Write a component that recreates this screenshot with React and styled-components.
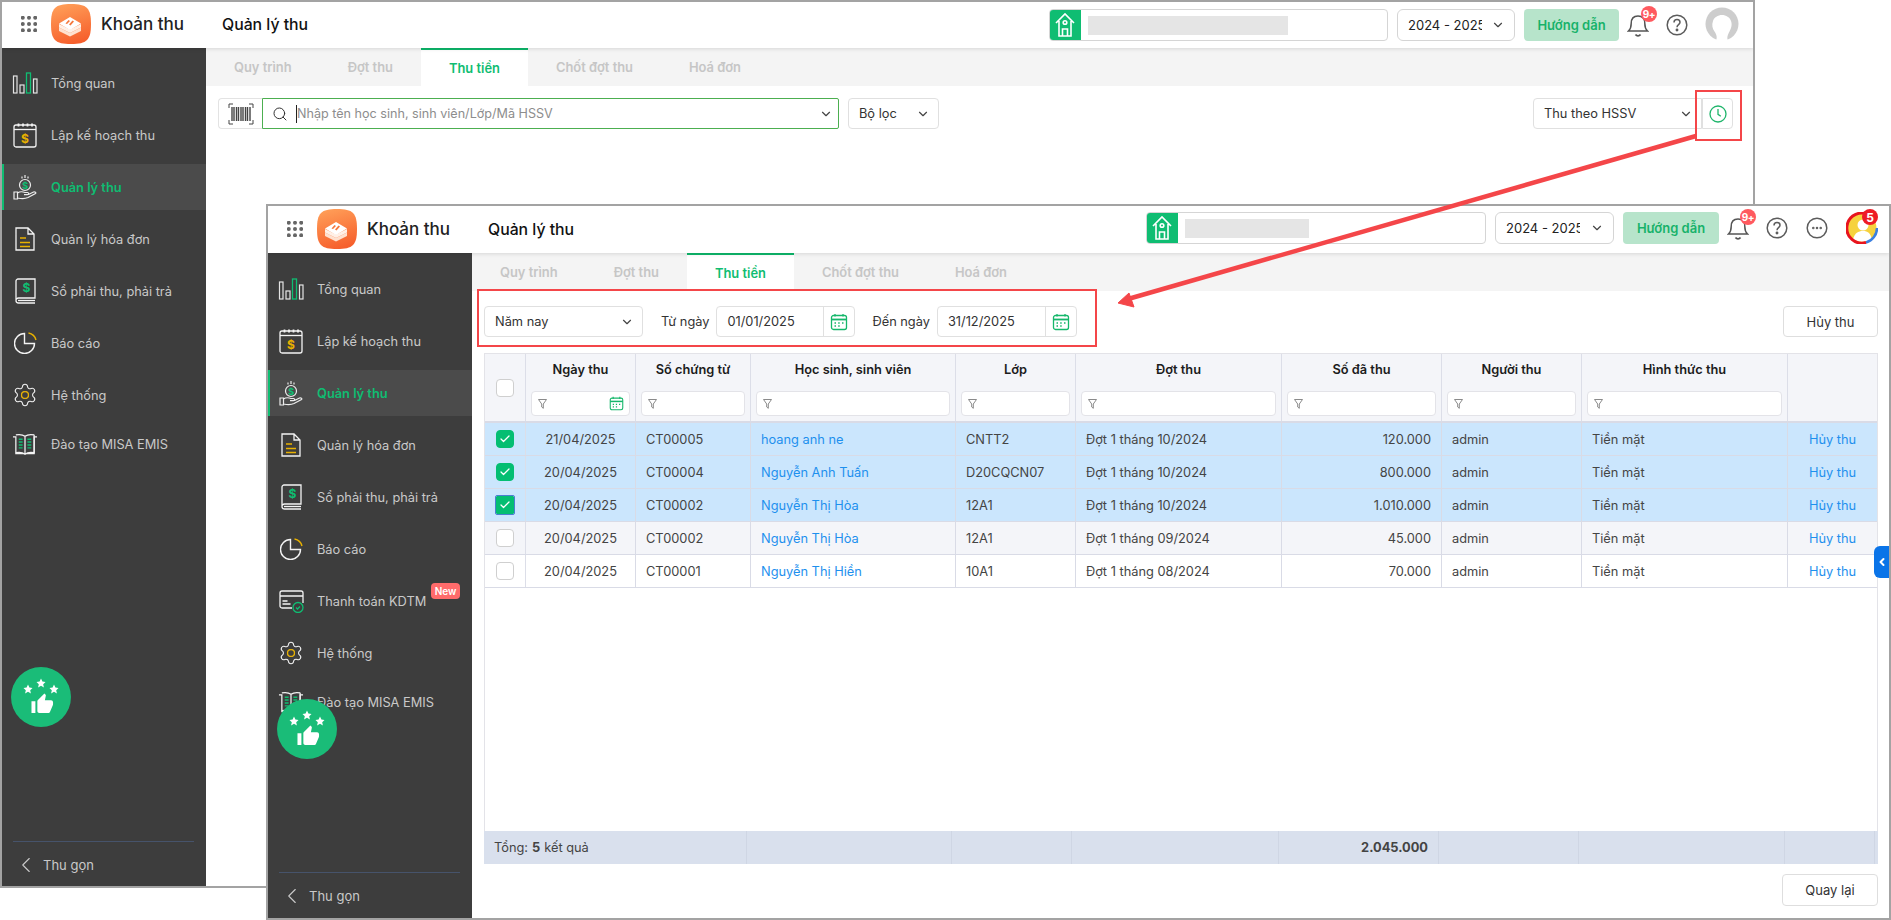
import React from "react";
import styled, { createGlobalStyle } from "styled-components";
import { ChevronDown, ChevronLeft, Search, Settings, Check } from "lucide-react";

const Global = createGlobalStyle`
  html, body { margin: 0; padding: 0; background: #fff; }
  body { font-family: Inter, "Noto Sans", "Liberation Sans", sans-serif; }
  * { box-sizing: border-box; }
`;

const GREEN = "#0fbd72";
const YEL = "#e8b100";

const Page = styled.div`
  position: relative; width: 1891px; height: 920px; overflow: hidden; background: #fff;
`;
const Win = styled.section`
  position: absolute; left: ${p => p.$x}px; top: ${p => p.$y}px; width: ${p => p.$w}px; height: ${p => p.$h}px;
  border: 2px solid #a3a3a3; background: #fff; display: flex; flex-direction: column; overflow: hidden;
`;
const Header = styled.header`
  flex: 0 0 ${p => p.$h}px; display: flex; align-items: flex-start; background: #fff;
  box-shadow: 0 1px 4px rgba(0,0,0,.12); position: relative; z-index: 2; padding-right: ${p => p.$pr}px;
`;
const Brand = styled.div`
  width: 204px; height: 40px; margin-top: ${p => p.$top}px; padding-left: 19px; display: flex; align-items: center; flex: none;
`;
const AppName = styled.span`
  margin-left: 10px; font-size: 17px; font-weight: 500; color: #222; white-space: nowrap;
`;
const PageTitle = styled.div`
  height: 40px; margin-top: ${p => p.$top}px; margin-left: 16px; display: flex; align-items: center;
  font-size: 15.8px; font-weight: 500; color: #111;
`;
const Controls = styled.div`
  margin-left: auto; margin-top: ${p => p.$top}px; display: flex; align-items: center;
`;
const HomeField = styled.div`
  width: ${p => p.$w}px; height: 32px; display: flex; align-items: center; border: 1px solid #d5d5d5; border-radius: 4px; overflow: hidden;
`;
const HomeTile = styled.div`
  width: 32px; height: 32px; margin-left: -1px; background: ${GREEN}; display: flex; align-items: center; justify-content: center; flex: none;
`;
const Blurred = styled.div`
  width: ${p => p.$w}px; height: 19px; margin-left: 7px; background: #e5e5e5; filter: blur(.6px);
`;
const YearSelect = styled.div`
  width: ${p => p.$w}px; height: 32px; margin-left: 9px; display: flex; align-items: center; justify-content: space-between;
  padding: 0 9px 0 10px; border: 1px solid #d5d5d5; border-radius: 6px; font-size: 13px; color: #222;
`;
const Clip = styled.span`
  width: 74px; overflow: hidden; white-space: nowrap;
`;
const Guide = styled.div`
  width: ${p => p.$w}px; height: 32px; margin-left: 9px; background: #b7e4cb; border-radius: 4px; display: flex; align-items: center; justify-content: center;
  color: #17b26a; font-size: 13px; font-weight: 600;
`;
const IconCell = styled.div`
  width: ${p => p.$w}px; height: 32px; position: relative; display: flex; align-items: center; justify-content: center; flex: none;
`;
const RedBadge = styled.span`
  position: absolute; top: -3px; left: ${p => p.$l}px; width: 16px; height: 16px; border-radius: 50%; background: ${p => p.$deep ? "#ee1c25" : "#ff5a5f"}; color: #fff;
  font-size: ${p => p.$deep ? 12 : 10}px; font-weight: 700; display: flex; align-items: center; justify-content: center; letter-spacing: -.3px;
`;
const AvatarBox = styled.div`
  width: ${p => p.$w}px; height: 32px; margin-left: 8px; position: relative; flex: none;
`;
const Body = styled.div`
  flex: 1; display: flex; min-height: 0;
`;
const Side = styled.nav`
  width: 204px; flex: none; background: #3d3d3d; position: relative; display: flex; flex-direction: column; padding-top: ${p => p.$pt}px;
`;
const Item = styled.div`
  position: relative; height: 46px; flex: none; margin-bottom: ${p => p.$tight ? 3 : 6}px;
  display: flex; align-items: center; padding-left: 8px;
  border-left: 2px solid ${p => p.$active ? GREEN : "transparent"};
  background: ${p => p.$active ? "#4b4b4b" : "transparent"};
  color: ${p => p.$active ? GREEN : "#c9c9c9"};
  font-size: 12.8px; font-weight: ${p => p.$active ? 600 : 400};
`;
const ItemIcon = styled.span`
  width: 26px; height: 30px; margin-right: 13px; display: flex; align-items: center; justify-content: center; flex: none;
`;
const NewTag = styled.span`
  position: absolute; left: 161px; top: 5px; width: 29px; height: 16px; background: #ff6b6b; border-radius: 4px; color: #fff;
  font-size: 10px; font-weight: 600; display: flex; align-items: center; justify-content: center;
`;
const SideFoot = styled.div`
  margin-top: auto; flex: 0 0 ${p => p.$h}px; margin-left: 11px; margin-right: 12px; border-top: 1px solid #46536b;
  display: flex; align-items: center; color: #c9c9c9; font-size: 13px; padding-top: ${p => p.$pt}px;
`;
const FootLabel = styled.span`
  margin-left: 4px;
`;
const Thumb = styled.div`
  position: absolute; left: 9px; bottom: 159px; width: 60px; height: 60px; border-radius: 50%; background: #1abc78;
  display: flex; align-items: center; justify-content: center; z-index: 1;
`;
const Main = styled.main`
  flex: 1; min-width: 0; display: flex; flex-direction: column; background: #fff;
`;
const Tabs = styled.div`
  flex: 0 0 38px; display: flex; background: #f4f4f4;
`;
const Tab = styled.div`
  padding: 0 28px; display: flex; align-items: center; font-size: 12.9px; font-weight: 600;
  color: ${p => p.$active ? GREEN : "#c6c6c6"}; background: ${p => p.$active ? "#fff" : "transparent"};
  border-top: 2px solid ${p => p.$active ? "#0db76b" : "transparent"};
  ${p => p.$active ? "" : "padding-bottom: 2px;"}
`;
const Bar = styled.div`
  display: flex; align-items: center; padding: ${p => p.$pad}; flex: none;
`;
const Barcode = styled.div`
  width: 44px; height: 31px; display: flex; align-items: center; justify-content: center; border: 1px solid #e3e3e3; border-right: 0; border-radius: 4px 0 0 4px;
`;
const SearchField = styled.div`
  width: 577px; height: 31px; border: 1px solid #4caf50; display: flex; align-items: center; padding: 0 5px 0 9px; border-radius: 0 2px 2px 0;
  font-size: 12.6px; color: #8d8d8d;
`;
const Caret = styled.span`
  width: 1px; height: 18px; background: #222; margin: 0 0 0 8px;
`;
const Grow = styled.span`
  flex: 1; white-space: nowrap;
`;
const Dropdown = styled.div`
  width: ${p => p.$w}px; height: 31px; margin-left: ${p => p.$ml || "0"}; border: 1px solid #e0e0e0; border-radius: ${p => p.$r || "4px"};
  display: flex; align-items: center; justify-content: space-between; padding: 0 ${p => p.$pr || 8}px 0 ${p => p.$pl || 10}px; font-size: 12.8px; color: #333; flex: none;
`;
const ClockBtn = styled.div`
  width: 31px; height: 31px; border: 1px solid #e0e0e0; border-left: 1px solid #e0e0e0; border-radius: 0 4px 4px 0; display: flex; align-items: center; justify-content: center; flex: none;
`;
const Label = styled.span`
  font-size: 12.8px; color: #333; margin-left: ${p => p.$ml}px; margin-right: 7px; white-space: nowrap;
`;
const DateField = styled.div`
  width: ${p => p.$w}px; height: 31px; border: 1px solid #e0e0e0; border-radius: 4px; display: flex; align-items: stretch; font-size: 12.8px; color: #333; flex: none;
`;
const DateText = styled.span`
  flex: 1; display: flex; align-items: center; padding-left: 10px; border-right: 1px solid #e0e0e0;
`;
const DateIcon = styled.span`
  width: 30px; display: flex; align-items: center; justify-content: center;
`;
const Outline = styled.div`
  margin-left: auto; width: ${p => p.$w}px; height: ${p => p.$h}px; border: 1px solid #dedede; border-radius: 4px; display: flex; align-items: center; justify-content: center;
  font-size: 13px; color: #333; flex: none;
`;
const Table = styled.div`
  margin: 0 11px 0 12px; flex: 1; min-height: 0; display: flex; flex-direction: column; border: 1px solid #e3e3e8; border-bottom: 0;
`;
const COLS = "41px 110px 115px 205px 120px 206px 160px 140px 206px 89px";
const HeadRow = styled.div`
  display: grid; grid-template-columns: ${COLS}; height: 69px; flex: none; background: #f4f5f9; border-bottom: 2px solid #d9dbe6;
`;
const HeadCell = styled.div`
  border-right: 1px solid #dcdee8; padding: 0 5px; display: flex; flex-direction: column; align-items: stretch;
  &:last-child { border-right: 0; }
`;
const BoxCell = styled.div`
  border-right: 1px solid #dcdee8; display: flex; align-items: center; justify-content: center;
`;
const HeadTitle = styled.div`
  height: 31px; margin-bottom: 6px; display: flex; align-items: center; justify-content: center; font-size: 12.8px; font-weight: 600; color: #1c1c1c; white-space: nowrap;
`;
const Filter = styled.div`
  height: 25px; background: #fff; border: 1px solid #e3e3e8; border-radius: 4px; display: flex; align-items: center; justify-content: space-between; padding: 0 5px 0 6px;
`;
const Row = styled.div`
  display: grid; grid-template-columns: ${COLS}; height: 33px; flex: none; border-bottom: 1px solid #d9dbe6; background: ${p => p.$bg};
`;
const Cell = styled.div`
  border-right: 1px solid #d9dbe6; display: flex; align-items: center; padding: 0 10px; font-size: 12.8px; white-space: nowrap;
  justify-content: ${p => p.$align || "flex-start"}; color: ${p => p.$link ? "#1e90ee" : "#444"};
  &:last-child { border-right: 0; }
`;
const Box = styled.span`
  width: 18px; height: 18px; border-radius: 4px; flex: none; display: flex; align-items: center; justify-content: center;
  background: ${p => p.$on ? "#04be72" : "#fff"}; border: 1px solid ${p => p.$on ? "#04be72" : "#cfcfcf"};
  ${p => p.$focus ? "outline: 1px solid #4a7fd0; border-radius: 1px;" : ""}
`;
const Spacer = styled.div`
  flex: 1;
`;
const Foot = styled.div`
  display: grid; grid-template-columns: 263px 205px 120px 207px 160px 140px 206px 90px 2px; height: 33px; flex: none; background: #d9e0ed; margin: 0 -1px;
`;
const FootCell = styled.div`
  border-right: 1px solid #cfd6e4; display: flex; align-items: center; padding: 0 10px; font-size: 12.8px; color: #444;
  justify-content: ${p => p.$align || "flex-start"}; font-weight: ${p => p.$bold ? 700 : 400}; white-space: nowrap;
  &:last-child { border-right: 0; padding: 0; }
  b { font-weight: 700; margin: 0 4px; }
`;
const BottomBar = styled.div`
  display: flex; padding: 10px 11px 12px 12px; flex: none;
`;
const SideToggle = styled.div`
  position: absolute; right: 0; top: 340px; width: 15px; height: 32px; background: #0a74e8; border-radius: 6px 0 0 6px; z-index: 3;
  display: flex; align-items: center; justify-content: center;
`;
const RedFrame = styled.div`
  position: absolute; left: ${p => p.$x}px; top: ${p => p.$y}px; width: ${p => p.$w}px; height: ${p => p.$h}px; border: 2px solid #f44649; z-index: 5; pointer-events: none;
`;
const ArrowLayer = styled.svg`
  position: absolute; left: 0; top: 0; width: 1891px; height: 920px; z-index: 6; pointer-events: none;
`;

const W = "#f3f3f3";
const S = { fill: "none", stroke: W, strokeWidth: 1.3 };

const GridDots = () => (
  <svg width="16" height="16" viewBox="0 0 16 16" fill="#666" style={{ flex: "none" }}>
    {[1.800, 8, 14.200].flatMap(y => [1.800, 8, 14.200].map(x => <circle key={x + "-" + y} cx={x} cy={y} r="2" />))}
  </svg>
);
const Logo = () => (
  <svg width="40" height="40" viewBox="0 0 40 40" style={{ flex: "none", marginLeft: 14 }}>
    <defs><linearGradient id="lg" x1="0.25" y1="0" x2="0.55" y2="1"><stop offset="0" stopColor="#ff9e58" /><stop offset="1" stopColor="#f65f2c" /></linearGradient></defs>
    <path d="M20 0C36 0 40 4 40 20S36 40 20 40 0 36 0 20 4 0 20 0Z" fill="url(#lg)" />
    <path d="M8 23.500v3.500l11 5.500 11-5.500v-3.500l-11 5.500z" fill="#ffe1cf" />
    <path d="M8 20v3.500l11 5.500 11-5.500v-3.500l-11 5.500z" fill="#fff0e6" />
    <path d="M19 13l11 6.500-11 6.500-11-6.500z" fill="#fff" />
    <path d="M14.500 19.500l3-3.500 1.500 1-3 3zM19.500 21.500l3.500-4-1.500-1-3.500 4z" fill="#f5763a" />
  </svg>
);
const House = () => (
  <svg width="20" height="26" viewBox="0 0 20 26" fill="none" stroke="#fff" strokeWidth="1.6">
    <path d="M1 11L10 2l9 9M4 9v15h12V9" />
    <path d="M7.500 24v-7h5v7" /><circle cx="10" cy="10.500" r="1.800" />
  </svg>
);
const Bell = () => (
  <svg width="22" height="26" viewBox="0 0 22 26" fill="none" stroke="#555" strokeWidth="1.500">
    <path d="M1.500 19c2-1.800 2.700-3.500 2.700-7.500C4.200 6.500 7 4 11 4s6.800 2.500 6.800 7.500c0 4 .7 5.700 2.700 7.500z" /><path d="M8.500 22.500c.6.800 1.500 1.300 2.500 1.300s1.900-.5 2.500-1.300" strokeWidth="1.800" />
  </svg>
);
const Help = () => (
  <svg width="22" height="22" viewBox="0 0 22 22" fill="none" stroke="#5c5c5c" strokeWidth="1.500">
    <circle cx="11" cy="11" r="9.800" /><path d="M8 8.500c0-1.700 1.300-3 3-3s3 1.200 3 2.800c0 2.400-3 2.400-3 5" /><circle cx="11" cy="16" r=".7" fill="#5c5c5c" />
  </svg>
);
const More = () => (
  <svg width="22" height="22" viewBox="0 0 22 22" fill="none" stroke="#5c5c5c" strokeWidth="1.500">
    <circle cx="11" cy="11" r="9.800" /><circle cx="7.300" cy="11" r=".5" /><circle cx="11" cy="11" r=".5" /><circle cx="14.700" cy="11" r=".5" />
  </svg>
);
const GreyAvatar = () => (
  <svg width="34" height="32" viewBox="0 0 34 32" style={{ overflow: "visible" }}>
    <circle cx="17" cy="15" r="16.500" fill="#cdcdcd" />
    <path d="M11 32c1.500-4 .5-6.500-1.500-9.500S6.500 16 8 12c1-3.500 5-6 9-6s8 2.500 9 6c1.500 4 0 7.500-1.500 10.500S21.500 28 23 32z" fill="#fff" />
  </svg>
);
const ColorAvatar = () => (
  <svg width="32" height="32" viewBox="0 0 32 32" fill="none">
    <circle cx="16" cy="16" r="14.500" fill="#f6d23e" />
    <circle cx="17" cy="13" r="5.500" fill="#fff" /><path d="M7 27c2-6 5-8 10-8s7 2 9 8c-5 3.500-14 3.500-19 0z" fill="#fff" />
    <path d="M31 16A15 15 0 0 1 20 30.500" stroke="#3a7fe0" strokeWidth="2.500" />
    <path d="M20 30.500A15 15 0 1 1 24 3.500" stroke="#e8141e" strokeWidth="3" />
  </svg>
);

const IcOverview = () => (
  <svg width="26" height="22" viewBox="0 0 26 22" {...S} strokeWidth="1.200" stroke="#e4e4e4">
    <rect x="1.500" y="4" width="3.500" height="17" /><rect x="8" y="13" width="4" height="8" />
    <rect x="14.500" y="1" width="4" height="20" stroke={GREEN} strokeWidth="1.300" /><rect x="21.500" y="7" width="3.500" height="14" />
  </svg>
);
const Dollar = ({ x, y, c, s = 11 }) => <text x={x} y={y} fontSize={s} fontWeight="700" fill={c} stroke="none" textAnchor="middle" fontFamily="Inter, sans-serif">$</text>;
const IcPlan = () => (
  <svg width="24" height="26" viewBox="0 0 24 26" {...S}>
    <rect x="1" y="3" width="22" height="22" rx="2" /><path d="M1 7.500h22" />
    <path d="M5.500 1.500v3M10 1.500v3M14.500 1.500v3M19 1.500v3" strokeWidth="1.800" /><Dollar x="12" y="21" c={YEL} s={12} />
  </svg>
);
const IcManage = () => (
  <svg width="24" height="26" viewBox="0 0 24 26" {...S} stroke="#ececec" strokeWidth="1.200">
    <circle cx="12" cy="11" r="5.500" /><Dollar x="12" y="14.500" c={GREEN} s={9.500} />
    <path d="M12 1v3M9 2.500v2M15 2.500v2" />
    <path d="M1 18h3.500v7H1zM4.500 19c3-2 5-1.500 7.500-.5h2.500c1.500 0 1.500 2.200 0 2.200H11M4.500 24c5 1 8.500.5 10.500-.5l7.500-4c1-1-.5-2-2-1.500l-5 2.500" />
  </svg>
);
const IcInvoice = () => (
  <svg width="20" height="24" viewBox="0 0 20 24" {...S}>
    <path d="M1 1h12l6 6v16H1zM13 1v6h6" /><path d="M5 11h6" stroke={YEL} strokeWidth="1.500" /><path d="M5 15.500h10M5 19.500h10" stroke={YEL} strokeWidth="1.500" />
  </svg>
);
const IcBook = () => (
  <svg width="21" height="26" viewBox="0 0 21 26" {...S}>
    <path d="M3 1h17v19H3.500C2 20 1 21 1 22.500S2 25 3.500 25H20M3 1C2 1 1 2 1 3v19.500" /><path d="M3 22.500h17" /><Dollar x="11.500" y="14" c={GREEN} s={12} />
  </svg>
);
const IcPie = () => (
  <svg width="23" height="22" viewBox="0 0 23 22" {...S} strokeWidth="1.400">
    <path d="M10.500 1.500A10 10 0 1 0 20.500 11.500H10.500z" /><path d="M14.500 1A9.500 9.500 0 0 1 22 8" stroke={YEL} />
  </svg>
);
const IcPay = () => (
  <svg width="25" height="23" viewBox="0 0 25 23" {...S}>
    <path d="M13 18H3a2 2 0 0 1-2-2V3a2 2 0 0 1 2-2h19a2 2 0 0 1 2 2v10M1 6h23" />
    <path d="M3.500 11h5M3.500 14h8" /><circle cx="19" cy="17.500" r="5" stroke={GREEN} /><path d="M17 17.500l1.500 1.500 2.500-2.500" stroke={GREEN} />
  </svg>
);
const IcGear = () => (
  <Settings size={28} color="#f0f0f0" strokeWidth={1}><circle cx="12" cy="12" r="3.200" stroke={YEL} strokeWidth="1.200" fill="#3d3d3d" /></Settings>
);
const IcTrain = () => (
  <svg width="27" height="23" viewBox="0 0 27 23" {...S}>
    <path d="M1 3.500h3V21h9.500M26 3.500h-3V21h-9.500M4 1.500c3-.5 7-.5 9.500 1.500V22M23 1.500c-3-.5-7-.5-9.500 1.500" />
    <path d="M23 1.500V20c-3-.5-7-.5-9.500 1.500C11 19.500 7 19.500 4 20" />
    <path d="M7 6h4M7 9h4M7 12h4M7 15h4M16 6h4M16 9h4M16 12h4M16 15h4" stroke={GREEN} strokeWidth="1.500" />
  </svg>
);
const ThumbArt = () => (
  <svg width="40" height="38" viewBox="0 0 40 38" fill="#fff">
    {[[7, 11], [20, 5], [33, 11]].map(([x, y]) => (
      <path key={x} transform={`translate(${x} ${y})`} d="M0-4.500 1.400-1.400 4.500-1 2.200 1.200 2.900 4.500 0 2.800-2.900 4.500-2.200 1.200-4.500-1-1.400-1.400Z" />
    ))}
    <g transform="translate(9.500 14.500) scale(.98)">
      <path d="M1 21h4V9H1v12zm22-11c0-1.100-.9-2-2-2h-6.310l.95-4.570.03-.32c0-.41-.17-.79-.44-1.060L14.170 1 7.590 7.590C7.220 7.950 7 8.450 7 9v10c0 1.100.9 2 2 2h9c.83 0 1.540-.5 1.840-1.220l3.020-7.050c.09-.23.140-.47.140-.73v-2z" />
    </g>
  </svg>
);
const BarcodeArt = () => (
  <svg width="26" height="22" viewBox="0 0 26 22" fill="none" stroke="#444">
    <path d="M5 1H1v4M21 1h4v4M5 21H1v-4M21 21h4v-4" strokeWidth="1" />
    <path d="M4 4v14M6 4v14M8.500 4v14M10.500 4v14M13 4v14M15 4v14M17.500 4v14M19.500 4v14M22 4v14" strokeWidth="1.400" />
  </svg>
);
const Clock = () => (
  <svg width="18" height="18" viewBox="0 0 18 18" fill="none" stroke="#1fb56b" strokeWidth="1.300">
    <circle cx="9" cy="9" r="8" /><path d="M9 4v5.300l2.800 2" />
  </svg>
);
const Cal = ({ s = 18 }) => (
  <svg width={s} height={s} viewBox="0 0 18 18" fill="none" stroke="#16b76b" strokeWidth="1.300">
    <rect x="1.500" y="2.500" width="15" height="14" rx="2" /><path d="M1.500 6.500h15" strokeWidth="1.800" /><path d="M5 1v2.500M13 1v2.500" />
    <path d="M4.500 10h1.500M8.200 10h1.500M12 10h1.500M4.500 13h1.500M8.200 13h1.500" strokeWidth="1.500" />
  </svg>
);
const Funnel = () => (
  <svg width="9" height="10" viewBox="0 0 9 10" fill="none" stroke="#7d7d7d" strokeWidth=".9">
    <path d="M.5.500h8L5.300 5v4.300L3.700 8V5z" />
  </svg>
);

const menu1 = [
  ["Tổng quan", <IcOverview />], ["Lập kế hoạch thu", <IcPlan />], ["Quản lý thu", <IcManage />, true],
  ["Quản lý hóa đơn", <IcInvoice />], ["Sổ phải thu, phải trả", <IcBook />], ["Báo cáo", <IcPie />],
];
const menuEnd = [["Hệ thống", <IcGear />], ["Đào tạo MISA EMIS", <IcTrain />]];

function Sidebar({ pt, extra, footH, footPt }) {
  const items = [...menu1, ...(extra ? [["Thanh toán KDTM", <IcPay />, false, true]] : []), ...menuEnd];
  return (
    <Side $pt={pt}>
      {items.map(([t, ic, a, n], i) => (
        <Item key={t} $active={a} $tight={i === items.length - 2}>
          <ItemIcon>{ic}</ItemIcon>{t}{n && <NewTag>New</NewTag>}
        </Item>
      ))}
      <Thumb><ThumbArt /></Thumb>
      <SideFoot $h={footH} $pt={footPt}><ChevronLeft size={26} strokeWidth={1} /><FootLabel>Thu gọn</FootLabel></SideFoot>
    </Side>
  );
}
function TopBar({ h, pr, logoTop, ctlTop, fieldW, blurW, selW, guideW, children }) {
  return (
    <Header $h={h} $pr={pr}>
      <Brand $top={logoTop}><GridDots /><Logo /><AppName>Khoản thu</AppName></Brand>
      <PageTitle $top={logoTop}>Quản lý thu</PageTitle>
      <Controls $top={ctlTop}>
        <HomeField $w={fieldW}><HomeTile><House /></HomeTile><Blurred $w={blurW} /></HomeField>
        <YearSelect $w={selW}><Clip>2024 - 2025</Clip><ChevronDown size={14} color="#444" /></YearSelect>
        <Guide $w={guideW}>Hướng dẫn</Guide>
        {children}
      </Controls>
    </Header>
  );
}
function TabBar() {
  return (
    <Tabs>
      <Tab>Quy trình</Tab><Tab>Đợt thu</Tab><Tab $active>Thu tiền</Tab><Tab>Chốt đợt thu</Tab><Tab>Hoá đơn</Tab>
    </Tabs>
  );
}

const heads = ["Ngày thu", "Số chứng từ", "Học sinh, sinh viên", "Lớp", "Đợt thu", "Số đã thu", "Người thu", "Hình thức thu"];
const rows = [
  ["21/04/2025", "CT00005", "hoang anh ne", "CNTT2", "Đợt 1 tháng 10/2024", "120.000", true, "#cbe6fd"],
  ["20/04/2025", "CT00004", "Nguyễn Anh Tuấn", "D20CQCN07", "Đợt 1 tháng 10/2024", "800.000", true, "#cbe6fd"],
  ["20/04/2025", "CT00002", "Nguyễn Thị Hòa", "12A1", "Đợt 1 tháng 10/2024", "1.010.000", true, "#cbe6fd", true],
  ["20/04/2025", "CT00002", "Nguyễn Thị Hòa", "12A1", "Đợt 1 tháng 09/2024", "45.000", false, "#f4f5f9"],
  ["20/04/2025", "CT00001", "Nguyễn Thị Hiền", "10A1", "Đợt 1 tháng 08/2024", "70.000", false, "#fff"],
];

export default function App() {
  return (
    <Page>
      <Global />
      <Win $x={0} $y={0} $w={1755} $h={888}>
        <TopBar h={46} pr={14} logoTop={2} ctlTop={7} fieldW={339} blurW={200} selW={118} guideW={95}>
          <IconCell $w={38}><Bell /><RedBadge $l={22}>9+</RedBadge></IconCell>
          <IconCell $w={40}><Help /></IconCell>
          <AvatarBox $w={34}><GreyAvatar /></AvatarBox>
        </TopBar>
        <Body>
          <Sidebar pt={12} footH={45} footPt={2} />
          <Main>
            <TabBar />
            <Bar $pad="12px 20px 0 12px">
              <Barcode><BarcodeArt /></Barcode>
              <SearchField><Search size={16} color="#333" strokeWidth={1.500} /><Caret /><Grow>Nhập tên học sinh, sinh viên/Lớp/Mã HSSV</Grow><ChevronDown size={14} color="#444" /></SearchField>
              <Dropdown $w={91} $ml="9px">Bộ lọc<ChevronDown size={14} color="#444" /></Dropdown>
              <Dropdown $w={169} $r="4px 0 0 4px" $ml="auto">Thu theo HSSV<ChevronDown size={14} color="#444" /></Dropdown>
              <ClockBtn><Clock /></ClockBtn>
            </Bar>
          </Main>
        </Body>
      </Win>

      <Win $x={266} $y={204} $w={1625} $h={716}>
        <TopBar h={47} pr={11} logoTop={3} ctlTop={6} fieldW={340} blurW={124} selW={119} guideW={96}>
          <IconCell $w={38}><Bell /><RedBadge $l={21}>9+</RedBadge></IconCell>
          <IconCell $w={39}><Help /></IconCell>
          <IconCell $w={42}><More /></IconCell>
          <AvatarBox $w={32}><ColorAvatar /><RedBadge $l={16} $deep>5</RedBadge></AvatarBox>
        </TopBar>
        <Body>
          <Sidebar pt={13} extra footH={46} footPt={0} />
          <Main>
            <TabBar />
            <Bar $pad="15px 11px 16px 12px">
              <Dropdown $w={159} $pl={10}>Năm nay<ChevronDown size={14} color="#444" /></Dropdown>
              <Label $ml={18}>Từ ngày</Label>
              <DateField $w={139}><DateText>01/01/2025</DateText><DateIcon><Cal /></DateIcon></DateField>
              <Label $ml={17}>Đến ngày</Label>
              <DateField $w={140}><DateText>31/12/2025</DateText><DateIcon><Cal /></DateIcon></DateField>
              <Outline $w={95} $h={31}>Hủy thu</Outline>
            </Bar>
            <Table>
              <HeadRow>
                <BoxCell><Box /></BoxCell>
                {heads.map((h, i) => (
                  <HeadCell key={h}>
                    <HeadTitle>{h}</HeadTitle>
                    <Filter><Funnel />{i === 0 && <Cal s={15} />}</Filter>
                  </HeadCell>
                ))}
                <HeadCell />
              </HeadRow>
              {rows.map((r, i) => (
                <Row key={i} $bg={r[7]}>
                  <BoxCell><Box $on={r[6]} $focus={r[8]}>{r[6] && <Check size={12} color="#fff" strokeWidth={2.500} />}</Box></BoxCell>
                  <Cell $align="center">{r[0]}</Cell>
                  <Cell>{r[1]}</Cell>
                  <Cell $link>{r[2]}</Cell>
                  <Cell>{r[3]}</Cell>
                  <Cell>{r[4]}</Cell>
                  <Cell $align="flex-end">{r[5]}</Cell>
                  <Cell>admin</Cell>
                  <Cell>Tiền mặt</Cell>
                  <Cell $link $align="center">Hủy thu</Cell>
                </Row>
              ))}
              <Spacer />
              <Foot>
                <FootCell>Tổng:<b>5</b>kết quả</FootCell>
                <FootCell /><FootCell />
                <FootCell />
                <FootCell $align="flex-end" $bold>2.045.000</FootCell>
                <FootCell /><FootCell /><FootCell /><FootCell />
              </Foot>
            </Table>
            <BottomBar><Outline $w={96} $h={32}>Quay lại</Outline></BottomBar>
          </Main>
        </Body>
        <SideToggle><ChevronLeft size={12} color="#fff" strokeWidth={4} /></SideToggle>
      </Win>

      <RedFrame $x={1695} $y={90} $w={47} $h={51} />
      <RedFrame $x={477} $y={289} $w={620} $h={58} />
      <ArrowLayer viewBox="0 0 1891 920">
        <path d="M1696 136L1128 299" stroke="#f44649" strokeWidth="4.500" fill="none" />
        <path d="M1118 303L1129 293 1134 307Z" fill="#f44649" stroke="#f44649" strokeWidth="1" />
      </ArrowLayer>
    </Page>
  );
}
